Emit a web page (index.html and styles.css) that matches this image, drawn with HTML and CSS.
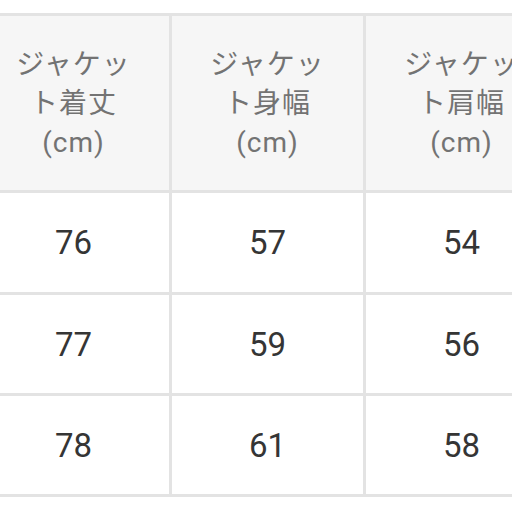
FILE: index.html
```html
<!DOCTYPE html>
<html lang="ja">
<head>
<meta charset="utf-8">
<link rel="stylesheet" href="styles.css">
</head>
<body>
<div class="size-table">
  <div class="cell head">ジャケット着丈(cm)</div>
  <div class="cell head">ジャケット身幅(cm)</div>
  <div class="cell head">ジャケット肩幅(cm)</div>
  <div class="cell">76</div>
  <div class="cell">57</div>
  <div class="cell">54</div>
  <div class="cell">77</div>
  <div class="cell">59</div>
  <div class="cell">56</div>
  <div class="cell">78</div>
  <div class="cell">61</div>
  <div class="cell">58</div>
</div>
</body>
</html>
```

FILE: styles.css
```css
html, body {
  margin: 0;
  padding: 0;
  background: #ffffff;
  overflow: hidden;
  width: 512px;
  height: 512px;
}

.size-table {
  display: grid;
  grid-template-columns: 191px 191px 191px;
  grid-template-rows: 174px 99px 98px 98px;
  gap: 3px;
  padding: 3px;
  margin-top: 13px;
  margin-left: -25px;
  width: max-content;
  background: #e3e3e3;
  font-family: Roboto, "Noto Sans CJK JP", sans-serif;
}

.cell {
  display: flex;
  align-items: center;
  justify-content: center;
  text-align: center;
  background: #ffffff;
  color: #353535;
  font-size: 33px;
}

.cell.head {
  background: #f6f6f6;
  color: #737373;
  font-size: 28px;
  line-height: 39px;
  letter-spacing: 1px;
  padding: 0 30px;
}
```
